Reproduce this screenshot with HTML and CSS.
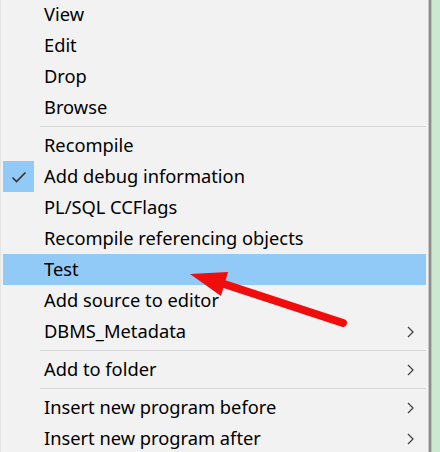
FILE: index.html
```html
<!DOCTYPE html>
<html>
<head>
<meta charset="utf-8">
<link rel="stylesheet" href="styles.css">
</head>
<body>
<div class="screen">
  <div class="menu">
    <ul class="list">
      <li class="item"><span class="label">View</span></li>
      <li class="item"><span class="label">Edit</span></li>
      <li class="item"><span class="label">Drop</span></li>
      <li class="item"><span class="label">Browse</span></li>
      <li class="sep"></li>
      <li class="item"><span class="label">Recompile</span></li>
      <li class="item checked"><span class="check"><svg width="16" height="12" viewBox="0 0 16 12"><path d="M1.5 6.5 L5.5 10.5 L14.5 1.5" fill="none" stroke="#333" stroke-width="1.6"/></svg></span><span class="label">Add debug information</span></li>
      <li class="item"><span class="label">PL/SQL CCFlags</span></li>
      <li class="item"><span class="label">Recompile referencing objects</span></li>
      <li class="item active"><span class="label">Test</span></li>
      <li class="item"><span class="label">Add source to editor</span></li>
      <li class="item sub"><span class="label">DBMS_Metadata</span><svg class="chev" width="7" height="12" viewBox="0 0 7 12"><path d="M1 1 L6 6 L1 11" fill="none" stroke="#444" stroke-width="1.3"/></svg></li>
      <li class="sep"></li>
      <li class="item sub"><span class="label">Add to folder</span><svg class="chev" width="7" height="12" viewBox="0 0 7 12"><path d="M1 1 L6 6 L1 11" fill="none" stroke="#444" stroke-width="1.3"/></svg></li>
      <li class="sep"></li>
      <li class="item sub"><span class="label">Insert new program before</span><svg class="chev" width="7" height="12" viewBox="0 0 7 12"><path d="M1 1 L6 6 L1 11" fill="none" stroke="#444" stroke-width="1.3"/></svg></li>
      <li class="item sub"><span class="label">Insert new program after</span><svg class="chev" width="7" height="12" viewBox="0 0 7 12"><path d="M1 1 L6 6 L1 11" fill="none" stroke="#444" stroke-width="1.3"/></svg></li>
    </ul>
  </div>
  <div class="edge"></div>
  <div class="side"></div>
  <svg class="arrow" width="440" height="452" viewBox="0 0 440 452">
    <line x1="218" y1="282" x2="343" y2="323" stroke="#f20d0d" stroke-width="8" stroke-linecap="round"/>
    <polygon points="190,274 228,272 221,296" fill="#f20d0d"/>
  </svg>
</div>
</body>
</html>
```
FILE: styles.css
```css
html, body {
  margin: 0;
  padding: 0;
}
body {
  width: 440px;
  height: 452px;
  overflow: hidden;
  background: #f2f2f2;
  font-family: "Noto Sans", "Open Sans", sans-serif;
}
.screen {
  position: relative;
  display: flex;
  width: 440px;
  height: 452px;
  overflow: hidden;
}
.menu {
  width: 428px;
  background: #f2f2f2;
  border-left: 1px solid #e4e4e4;
  box-sizing: border-box;
}
.list {
  list-style: none;
  margin: -1px 0 0 0;
  padding: 0 2px 0 2px;
}
.item {
  display: flex;
  align-items: center;
  height: 31px;
  position: relative;
  color: #000;
  font-size: 18.3px;
  line-height: 31px;
}
.label {
  padding-left: 41px;
  white-space: nowrap;
  position: relative;
  top: -1px;
}
.item.active {
  background: #91c9f7;
}
.check {
  position: absolute;
  left: 0;
  top: 0;
  width: 31px;
  height: 31px;
  background: #91c9f7;
  display: flex;
  align-items: center;
  justify-content: center;
}
.chev {
  margin-left: auto;
  margin-right: 12px;
}
.sep {
  height: 7px;
  display: flex;
  align-items: center;
  padding-left: 37px;
}
.sep::before {
  content: "";
  display: block;
  width: 100%;
  height: 1px;
  background: #d7d7d7;
}
.edge {
  width: 4px;
  background: linear-gradient(to right, #c8c8c8 0, #c8c8c8 1px, #8c8c8c 1px, #8c8c8c 3px, #b4c8b6 3px);
}
.side {
  flex: 1;
  background: #cce8cf;
}
.arrow {
  position: absolute;
  left: 0;
  top: 0;
}
```
